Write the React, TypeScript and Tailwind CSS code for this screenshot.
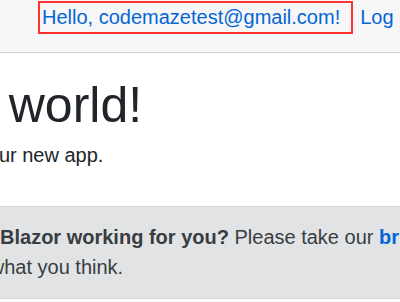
import React from "react";
import { Pencil } from "lucide-react";

export default function App() {
  return (
    <div className="w-[400px] h-[302px] overflow-hidden bg-white font-['Liberation_Sans',Arial,sans-serif]">
      <div className="h-[53px] bg-[#f7f7f7] border-b border-[#d6d5d5] flex items-start pt-[1px] pl-[38px] whitespace-nowrap text-[20px] text-[#0366d6]">
        <a href="#" className="block border-2 border-[#ff3333] h-[33px] pl-[2px] pr-[11px] leading-[29px]">
          Hello, codemazetest@gmail.com!
        </a>
        <a href="#" className="block ml-[7px] mt-[2px] leading-[29px]">
          Log out
        </a>
      </div>
      <div className="pt-[22px] ml-[-133px] w-[1000px] text-[#212529]">
        <h1 className="text-[50px] leading-[60px] font-medium mb-[5px]">Hello, world!</h1>
        <p className="text-[20px] leading-[30px]">Welcome to your new app.</p>
        <div
          role="alert"
          className="mt-[36px] border border-[#d6d8db] bg-[#e2e3e5] text-[#383d41] pl-[25px] pr-[25px] pt-[15px] pb-[16px] text-[20px] leading-[30px]"
        >
          <span className="inline-block w-[27px] mr-[10px] align-middle" aria-hidden="true">
            <Pencil size={20} />
          </span>
          <strong className="font-bold">How is Blazor working for you?</strong>{" "}
          <span className="whitespace-nowrap">
            Please take our{" "}
            <a href="#" className="font-bold text-[#0366d6]">
              brief survey
            </a>
          </span>
          <br />
          and tell us what you think.
        </div>
      </div>
    </div>
  );
}
